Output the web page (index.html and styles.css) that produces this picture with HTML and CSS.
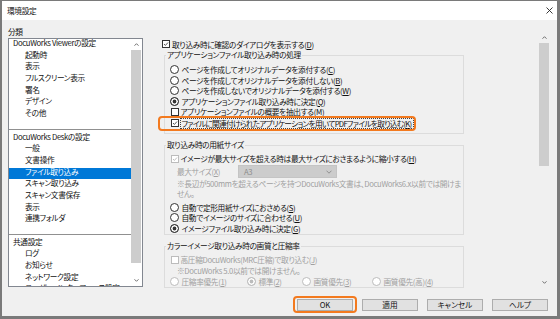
FILE: index.html
```html
<!DOCTYPE html>
<html lang="ja">
<head>
  <meta charset="utf-8">
  <title>環境設定</title>
  <link rel="stylesheet" href="styles.css">
</head>
<body>
<div class="window">
  <div class="titlebar">
    <span class="title">環境設定</span>
    <svg class="close" width="7" height="7" viewBox="0 0 7 7"><path d="M0.5 0.5L6.5 6.5M6.5 0.5L0.5 6.5" stroke="#222" stroke-width="0.9"/></svg>
  </div>

  <div class="main">
    <!-- category list -->
    <div class="cats">
      <div class="cats-label">分類</div>
      <div class="listbox">
        <ul class="list">
          <li class="head">DocuWorks Viewerの設定</li>
          <li>起動時</li>
          <li>表示</li>
          <li>フルスクリーン表示</li>
          <li>署名</li>
          <li>デザイン</li>
          <li>その他</li>
          <li class="sep"></li>
          <li class="head">DocuWorks Deskの設定</li>
          <li>一般</li>
          <li>文書操作</li>
          <li class="sel">ファイル取り込み</li>
          <li>スキャン取り込み</li>
          <li>スキャン文書保存</li>
          <li>表示</li>
          <li>連携フォルダ</li>
          <li class="sep"></li>
          <li class="head">共通設定</li>
          <li>ログ</li>
          <li>お知らせ</li>
          <li>ネットワーク設定</li>
          <li>ユーザーインターフェース設定</li>
        </ul>
        <div class="vscroll list-scroll">
          <span class="arrow"><svg width="5" height="3" viewBox="0 0 5 3"><path d="M0.5 2.7L2.5 0.7L4.5 2.7" fill="none" stroke="#606060" stroke-width="0.9"/></svg></span>
          <span class="track"><span class="thumb"></span></span>
          <span class="arrow"><svg width="5" height="3" viewBox="0 0 5 3"><path d="M0.5 0.3L2.5 2.3L4.5 0.3" fill="none" stroke="#606060" stroke-width="0.9"/></svg></span>
        </div>
      </div>
    </div>

    <!-- settings pane -->
    <div class="pane">
      <div class="pane-body">
        <div class="row top-row">
          <span class="cb on"><svg viewBox="0 0 8 8"><path d="M1.3 4L3.2 5.9L6.7 2" fill="none" stroke="#222" stroke-width="1"/></svg></span>
          <span>取り込み時に確認のダイアログを表示する(<u>D</u>)</span>
        </div>

        <fieldset class="group g1">
          <legend>アプリケーションファイル取り込み時の処理</legend>
          <div class="row"><span class="radio"></span><span>ページを作成してオリジナルデータを添付する(<u>C</u>)</span></div>
          <div class="row"><span class="radio"></span><span>ページを作成してオリジナルデータを添付しない(<u>B</u>)</span></div>
          <div class="row"><span class="radio"></span><span>ページを作成しないでオリジナルデータを添付する(<u>W</u>)</span></div>
          <div class="row"><span class="radio on"></span><span>アプリケーションファイル取り込み時に決定(<u>Q</u>)</span></div>
          <div class="row cbrow"><span class="cb"></span><span>アプリケーションファイルの概要を抽出する(<u>M</u>)</span></div>
          <div class="row cbrow focus-row">
            <span class="cb on"><svg viewBox="0 0 8 8"><path d="M1.3 4L3.2 5.9L6.7 2" fill="none" stroke="#222" stroke-width="1"/></svg></span>
            <span class="focus">ファイルに関連付けられたアプリケーションを用いてPDFファイルを取り込む(<u>K</u>)</span>
            <span class="hl"></span>
          </div>
        </fieldset>

        <fieldset class="group g2">
          <legend>取り込み時の用紙サイズ</legend>
          <div class="row cbrow"><span class="cb dis on"><svg viewBox="0 0 8 8"><path d="M1.3 4L3.2 5.9L6.7 2" fill="none" stroke="#a8a8a8" stroke-width="1"/></svg></span><span>イメージが最大サイズを超える時は最大サイズにおさまるように縮小する(<u>H</u>)</span></div>
          <div class="row size-row">
            <span class="size-label dim">最大サイズ(<u>X</u>)</span>
            <span class="select">A3<svg width="6" height="4" viewBox="0 0 6 4"><path d="M0.5 0.7L3 3.2L5.5 0.7" fill="none" stroke="#8a8a8a" stroke-width="0.9"/></svg></span>
          </div>
          <p class="note dim">※長辺が500mmを超えるページを持つDocuWorks文書は、DocuWorks6.x以前では開けま<br>せん。</p>
          <div class="row"><span class="radio"></span><span>自動で定形用紙サイズにおさめる(<u>S</u>)</span></div>
          <div class="row"><span class="radio"></span><span>自動でイメージのサイズに合わせる(<u>U</u>)</span></div>
          <div class="row"><span class="radio on"></span><span>イメージファイル取り込み時に決定(<u>G</u>)</span></div>
        </fieldset>

        <fieldset class="group g3">
          <legend>カラーイメージ取り込み時の画質と圧縮率</legend>
          <div class="row cbrow"><span class="cb dis"></span><span class="dim">高圧縮DocuWorks(MRC圧縮)で取り込む(<u>J</u>)</span></div>
          <p class="note note2 dim">※DocuWorks 5.0以前では開けません。</p>
          <div class="row quality">
            <span class="opt w1"><span class="radio dis"></span><span class="dim">圧縮率優先(<u>1</u>)</span></span>
            <span class="opt w2"><span class="radio dis on"></span><span class="dim">標準(<u>2</u>)</span></span>
            <span class="opt w3"><span class="radio dis"></span><span class="dim">画質優先(<u>3</u>)</span></span>
            <span class="opt"><span class="radio dis"></span><span class="dim">画質優先(高)(<u>4</u>)</span></span>
          </div>
        </fieldset>
      </div>
      <div class="vscroll pane-scroll">
        <span class="arrow"><svg width="5" height="3" viewBox="0 0 5 3"><path d="M0.5 2.7L2.5 0.7L4.5 2.7" fill="none" stroke="#606060" stroke-width="0.9"/></svg></span>
        <span class="track"><span class="thumb"></span></span>
        <span class="arrow"><svg width="5" height="3" viewBox="0 0 5 3"><path d="M0.5 0.3L2.5 2.3L4.5 0.3" fill="none" stroke="#606060" stroke-width="0.9"/></svg></span>
      </div>
    </div>
  </div>

  <div class="buttons">
    <button class="btn ok">OK</button>
    <button class="btn">適用</button>
    <button class="btn">キャンセル</button>
    <button class="btn">ヘルプ</button>
  </div>
</div>
</body>
</html>
```

FILE: styles.css
```css
* { box-sizing: border-box; }
html, body { margin: 0; padding: 0; }
body {
  width: 560px; height: 319px; overflow: hidden;
  background: #7a7a7a;
  font-family: "Noto Sans CJK JP", "Noto Sans", sans-serif;
  font-size: 7.7px; color: #111;
  font-feature-settings: "palt";
  letter-spacing: -0.35px;
}
u { text-decoration-thickness: 0.6px; text-underline-offset: 1px; }

.window {
  width: 560px; height: 319px;
  border: solid #7a7a7a; border-width: 1px 3px 3px 2px;
  background: #f0f0f0;
  display: flex; flex-direction: column;
}

.titlebar {
  height: 19px; flex: none; background: #fff;
  display: flex; align-items: center; justify-content: space-between;
  padding: 0 4px 0 5px;
}
.close { display: block; }

.main { display: flex; height: 268px; padding-left: 6px; }

/* left list */
.cats { width: 135px; flex: none; padding-top: 6px; }
.cats-label { height: 12px; line-height: 12px; }
.listbox {
  height: 249px; border: 1px solid #828790; background: #fff;
  display: flex; overflow: hidden;
}
.list { flex: 1; margin: 0; padding: 0; list-style: none; }
.list li { height: 11.7px; line-height: 8px; padding-left: 16px; white-space: nowrap; }
.list li.head { padding-left: 4px; }
.list li.sel { background: #0078d7; color: #fff; }
.list li.sep { padding: 8px 0 0; }
.list li.sep::before { content: ""; display: block; border-top: 1px solid #909090; }

.vscroll { display: flex; flex-direction: column; flex: none; }
.vscroll .arrow { height: 11px; display: flex; align-items: center; justify-content: center; }
.vscroll .arrow svg { display: block; }
.vscroll .track { flex: 1; }
.vscroll .thumb { display: block; background: #cdcdcd; }
.list-scroll { width: 11px; }
.list-scroll .thumb { height: 213px; margin-right: 1px; }
.pane-scroll { width: 10px; background: #f0f0f0; }
.pane-scroll .thumb { height: 123px; }

/* right pane */
.pane { width: 399px; height: 256px; margin: 12px 0 0 7px; display: flex; }
.pane-body { flex: 1; overflow: hidden; padding-top: 7px; }

.row { display: flex; align-items: center; gap: 2.5px; height: 10.5px; padding-left: 5px; white-space: nowrap; }
.top-row { height: 10px; padding-left: 12px; gap: 2px; }
.cbrow { padding-left: 6px; gap: 1.5px; }

.cb {
  width: 8px; height: 8px; flex: none;
  border: 1px solid #333; background: #fff;
  display: flex; align-items: center; justify-content: center;
}
.cb svg { width: 8px; height: 8px; display: block; }
.cb.dis { border-color: #bcbcbc; }
.radio {
  width: 9px; height: 9px; flex: none; border-radius: 50%;
  border: 1px solid #333; background: #fff;
}
.radio.on { background: #333; box-shadow: inset 0 0 0 1.6px #fff; }
.radio.dis { border-color: #bcbcbc; }
.radio.dis.on { background: #bcbcbc; }

.dim { color: #a0a0a0; }

.group {
  margin: 1px 0 0 14px; width: 300px; min-width: 0;
  padding: 0; border: 1px solid #dcdcdc;
}
.group legend { margin-left: 1px; padding: 0 1px; line-height: 10px; }
.g1 { padding: 4.5px 0 4px; }
.g1 .focus-row { height: 12px; position: relative; }
.focus { outline: 1px dotted #444; padding: 0 1px; line-height: 9px; letter-spacing: -0.7px; }
.hl {
  position: absolute; left: -7px; right: 47px; top: -1.5px; bottom: -1.5px;
  border: 2.5px solid #f37a1f; border-radius: 4px;
}

.g2 { margin-top: 6px; padding: 3px 0 0.5px; }
.g2 .cbrow { height: 11px; }
.size-row { height: 15px; padding-left: 12px; gap: 0; }
.size-label { width: 61px; }
.select {
  width: 99px; height: 13px; background: #cccccc; border: 1px solid #c4c4c4;
  color: #8c8c8c; display: flex; align-items: center; justify-content: space-between;
  padding: 0 4px 0 5px;
}
.note { margin: 0 0 4px; padding-left: 12px; line-height: 9.5px; white-space: nowrap; }

.g3 { margin-top: 6px; padding-top: 3.5px; }
.note2 { margin: 0; line-height: 11px; }
.quality { gap: 0; padding-left: 5px; }
.opt { display: flex; align-items: center; gap: 2.5px; }
.w1 { width: 77px; }
.w2 { width: 55px; }
.w3 { width: 70px; }

/* dialog buttons */
.buttons { display: flex; justify-content: flex-end; gap: 9px; padding: 11px 9px 0 0; }
.btn {
  width: 56px; height: 12px; padding: 0;
  background: #e1e1e1; border: 1px solid #adadad;
  font: inherit; color: #111; line-height: 10px;
}
.btn.ok { position: relative; }
.btn.ok::after {
  content: ""; position: absolute; left: -5px; right: -5px; top: -4px; bottom: -3px;
  border: 2.5px solid #f37a1f; border-radius: 4px;
}
```
